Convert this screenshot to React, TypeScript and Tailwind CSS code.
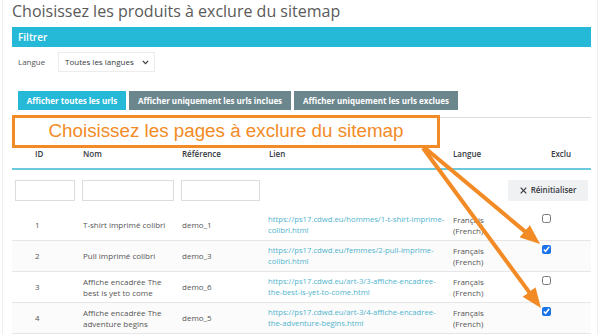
import React from "react";

const rows = [
  { id: "1", nom: ["T-shirt imprimé colibri"], ref: "demo_1", lien: ["https://ps17.cdwd.eu/hommes/1-t-shirt-imprime-", "colibri.html"], checked: false },
  { id: "2", nom: ["Pull imprimé colibri"], ref: "demo_3", lien: ["https://ps17.cdwd.eu/femmes/2-pull-imprime-", "colibri.html"], checked: true },
  { id: "3", nom: ["Affiche encadrée The", "best is yet to come"], ref: "demo_6", lien: ["https://ps17.cdwd.eu/art-3/3-affiche-encadree-", "the-best-is-yet-to-come.html"], checked: false },
  { id: "4", nom: ["Affiche encadrée The", "adventure begins"], ref: "demo_5", lien: ["https://ps17.cdwd.eu/art-3/4-affiche-encadree-", "the-adventure-begins.html"], checked: true },
];

const grid = "grid grid-cols-[67px_99px_86px_185px_81px_60px]";

export default function App() {
  return (
    <div className="relative w-[600px] h-[334px] overflow-hidden bg-white font-['Open_Sans',sans-serif]">
      <div className="ml-[2px] w-[596px] h-[334px] border-x border-[#eeeeee] pl-[9px] pr-[6px]">
        <div className="h-[22px] leading-[22px] text-[16px] text-[#5a5a5a] whitespace-nowrap">
          Choisissez les produits à exclure du sitemap
        </div>
        <div className="mt-[5px] h-[20px] bg-[#25b9d7] text-white text-[10px] font-semibold leading-[20px] pl-[6px]">
          Filtrer
        </div>
        <div className="mt-[5px] h-[20px] flex items-center">
          <span className="ml-[6px] w-[40px] text-[8px] text-[#555]">Langue</span>
          <div className="w-[97px] h-[20px] border border-[#ececec] flex items-center justify-between pl-[6px] pr-[5px] text-[8px] text-[#363a41]">
            <span>Toutes les langues</span>
            <svg width="7" height="5" viewBox="0 0 7 5"><path d="M0.8 0.8 L3.5 3.6 L6.2 0.8" fill="none" stroke="#363a41" strokeWidth="1.2" /></svg>
          </div>
        </div>
        <div className="mt-[19px] h-[19px] flex gap-[3px] ml-[6px]">
          <div className="w-[108px] bg-[#25b9d7] text-white text-[8px] font-bold leading-[19px] text-center">Afficher toutes les urls</div>
          <div className="w-[162px] bg-[#6c868e] text-white text-[8px] font-bold leading-[19px] text-center">Afficher uniquement les urls inclues</div>
          <div className="w-[164px] bg-[#6c868e] text-white text-[8px] font-bold leading-[19px] text-center">Afficher uniquement les urls exclues</div>
        </div>
        <div className="mt-[7px] border-t border-[#dddddd]">
          <div className={`${grid} h-[52px] items-end pb-[8px] border-b-2 border-[#6cc9dd] text-[8px] font-semibold text-[#363a41]`}>
            <div className="pl-[23px]">ID</div>
            <div className="pl-[4px]">Nom</div>
            <div className="pl-[4px]">Référence</div>
            <div className="pl-[5px]">Lien</div>
            <div className="pl-[4px]">Langue</div>
            <div className="pl-[21px]">Exclu</div>
          </div>
          <div className="h-[40px] flex items-center">
            <div className="ml-[3px] w-[60px] h-[21px] border border-[#dcdcdc] bg-white" />
            <div className="ml-[7px] w-[92px] h-[21px] border border-[#dcdcdc] bg-white" />
            <div className="ml-[7px] w-[79px] h-[21px] border border-[#dcdcdc] bg-white" />
            <div className="ml-auto mr-[3px] w-[80px] h-[21px] bg-[#f0f1f2] flex items-center justify-center gap-[4px] text-[8px] font-semibold text-[#363a41]">
              <svg width="7" height="7" viewBox="0 0 7 7"><path d="M0.7 0.7 L6.3 6.3 M6.3 0.7 L0.7 6.3" stroke="#363a41" strokeWidth="1.2" /></svg>
              <span>Réinitialiser</span>
            </div>
          </div>
          {rows.map((r, i) => (
            <div key={r.id} className={`${grid} h-[31px] border-b border-[#e6e6e6] text-[8px] text-[#555] leading-[11.5px] ${i % 2 === 1 ? "bg-[#fbfbfb]" : "bg-white"}`}>
              <div className="pl-[23px] self-center">{r.id}</div>
              <div className="pl-[4px] self-center">
                {r.nom.map((n) => (<div key={n} className="whitespace-nowrap">{n}</div>))}
              </div>
              <div className="pl-[4px] self-center">{r.ref}</div>
              <div className="pl-[4px] self-center text-[7.7px] text-[#4fb3cc]">
                {r.lien.map((n) => (<div key={n} className="whitespace-nowrap">{n}</div>))}
              </div>
              <div className="pl-[4px] self-center">
                <div>Français</div>
                <div>(French)</div>
              </div>
              <div className="pl-[12px] pt-[4px]">
                <input type="checkbox" defaultChecked={r.checked} className="m-0 w-[9px] h-[9px] accent-[#1a73e8] block" />
              </div>
            </div>
          ))}
        </div>
      </div>

      <div className="absolute left-[12px] top-[115px] w-[428px] h-[33px] border-[3px] border-[#f28b26] bg-white flex items-center justify-center font-['Liberation_Sans',Arial,sans-serif] text-[18.8px] text-[#f28b26] whitespace-nowrap">
        Choisissez les pages à exclure du sitemap
      </div>

      <svg className="absolute left-0 top-0 pointer-events-none" width="600" height="334" viewBox="0 0 600 334">
        <defs>
          <marker id="ah" viewBox="0 0 20 16" refX="12" refY="8" markerWidth="20" markerHeight="16" markerUnits="userSpaceOnUse" orient="auto">
            <path d="M0 0 L20 8 L0 16 Z" fill="#f28b26" />
          </marker>
        </defs>
        <line x1="425" y1="148" x2="533.9" y2="238.9" stroke="#f28b26" strokeWidth="4" markerEnd="url(#ah)" />
        <line x1="423" y1="148" x2="536.2" y2="301.6" stroke="#f28b26" strokeWidth="4" markerEnd="url(#ah)" />
      </svg>
    </div>
  );
}
